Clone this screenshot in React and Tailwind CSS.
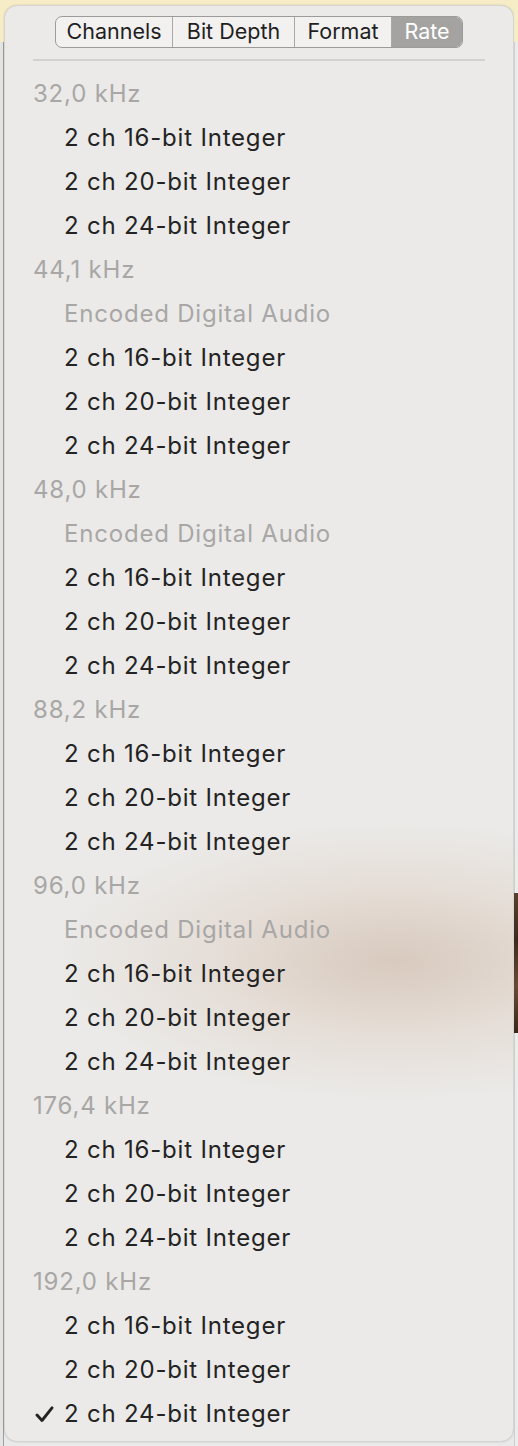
import React from "react";

const groups = [
  { rate: "32,0 kHz", encoded: false },
  { rate: "44,1 kHz", encoded: true },
  { rate: "48,0 kHz", encoded: true },
  { rate: "88,2 kHz", encoded: false },
  { rate: "96,0 kHz", encoded: true },
  { rate: "176,4 kHz", encoded: false },
  { rate: "192,0 kHz", encoded: false },
];

const formats = ["2 ch 16-bit Integer", "2 ch 20-bit Integer", "2 ch 24-bit Integer"];

const tabs = [
  { label: "Channels", w: "w-[117px]" },
  { label: "Bit Depth", w: "w-[122px]" },
  { label: "Format", w: "w-[97px]" },
  { label: "Rate", w: "w-[70px]" },
];

function Row({ children, muted, indent, checked }) {
  return (
    <div
      className={
        "h-[44px] flex items-center relative " +
        (indent ? "pl-[59px] " : "pl-[28px] ") +
        (muted ? "text-[#a8a7a6]" : "text-[#232323]")
      }
    >
      {checked && (
        <svg className="absolute left-[30px] top-[14px]" width="19" height="17" viewBox="0 0 19 17">
          <path d="M2 9 L7 14.5 L17 1.8" fill="none" stroke="#232323" strokeWidth="2.9" strokeLinecap="round" strokeLinejoin="round" />
        </svg>
      )}
      {children}
    </div>
  );
}

export default function App() {
  return (
    <div className="w-[518px] h-[1446px] flex bg-[#e9e9e9] font-['Inter',sans-serif]">
      {/* window behind, left edge */}
      <div className="w-[4px] flex flex-col">
        <div className="h-[42px] bg-[#f6ecc5]" />
        <div className="flex-1 border-r border-[#9f9f9f] bg-[#e4e4e4]" />
      </div>

      <div className="w-[510px] pt-[5px] bg-[linear-gradient(to_bottom,#f6ecc5_0px,#f6ecc5_42px,#e9e9e9_42px)]">
        <div className="h-[1437px] rounded-[13px] border border-[#d6d4d1] bg-[#ebeae8] bg-[radial-gradient(ellipse_340px_140px_at_390px_955px,rgba(208,188,172,0.7),rgba(222,205,192,0.4)_55%,transparent_100%)] shadow-[0_0_2px_rgba(0,0,0,0.15)] overflow-hidden">
          <div className="flex justify-center pt-[10px]">
            <div className="flex h-[32px] rounded-[7px] border border-[#9c9b9a] bg-[#f2f1f0] overflow-hidden text-[21.5px] leading-none">
              {tabs.map((t, i) => (
                <div
                  key={t.label}
                  className={
                    t.w +
                    " flex items-center justify-center " +
                    (i < tabs.length - 1 ? "border-r border-[#a9a8a7] text-[#1f1f1f] " : "bg-[#a4a3a2] text-white ")
                  }
                >
                  {t.label}
                </div>
              ))}
            </div>
          </div>
          <div className="mx-[28px] mt-[11px] h-[2px] bg-[#d3d2d0]" />
          <div className="pt-[11px] text-[24px] tracking-[0.8px]">
            {groups.map((g, gi) => (
              <div key={g.rate}>
                <Row muted>{g.rate}</Row>
                {g.encoded && (
                  <Row muted indent>
                    Encoded Digital Audio
                  </Row>
                )}
                {formats.map((f, fi) => (
                  <Row key={f} indent checked={gi === groups.length - 1 && fi === 2}>
                    {f}
                  </Row>
                ))}
              </div>
            ))}
          </div>
        </div>
      </div>

      {/* window behind, right edge */}
      <div className="w-[4px] flex flex-col">
        <div className="h-[42px] bg-[#f6ecc5]" />
        <div className="h-[851px] border-l border-[#cfcfcf] bg-[#ececec]" />
        <div className="h-[140px] bg-[linear-gradient(to_bottom,#5a3f2c,#3e2a1d,#6b4a33,#3a2619)]" />
        <div className="flex-1 border-l border-[#cfcfcf] bg-[#ececec]" />
      </div>
    </div>
  );
}
